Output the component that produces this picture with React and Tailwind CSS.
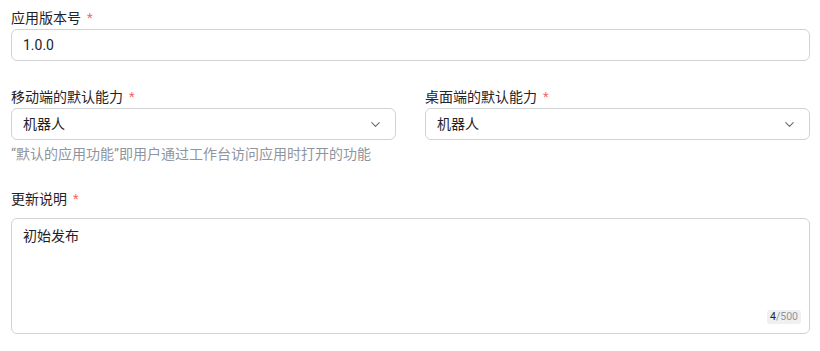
import { ChevronDown } from 'lucide-react';

const font = { fontFamily: 'Roboto, "Noto Sans CJK SC", sans-serif' };

function Label({ children }) {
  return (
    <div className="flex items-center h-[20px] text-[14px] text-[#1f2329] leading-[20px]">
      {children}
      <span className="ml-[6px] text-[13px] text-[#f76964]">*</span>
    </div>
  );
}

function Select({ value }) {
  return (
    <div className="flex items-center justify-between h-[32px] px-[11px] border border-[#d0d3d6] rounded-[6px] bg-white text-[14px] text-[#1f2329]">
      <span>{value}</span>
      <ChevronDown size={15} strokeWidth={1.75} className="text-[#646a73] mr-[1px]" />
    </div>
  );
}

export default function App() {
  return (
    <div className="bg-white w-[820px] h-[351px] pl-[11px] pr-[10px] pt-[8px]" style={font}>
      <Label>应用版本号</Label>
      <div className="mt-[1px] flex items-center h-[32px] px-[11px] border border-[#d0d3d6] rounded-[6px] text-[14px] text-[#1f2329]">
        1.0.0
      </div>

      <div className="grid grid-cols-2 gap-x-[29px] mt-[26px]">
        <div>
          <Label>移动端的默认能力</Label>
          <div className="mt-[1px]">
            <Select value="机器人" />
          </div>
          <div className="mt-[4px] text-[14px] leading-[20px] text-[#8f959e]">
            “默认的应用功能”即用户通过工作台访问应用时打开的功能
          </div>
        </div>
        <div>
          <Label>桌面端的默认能力</Label>
          <div className="mt-[1px]">
            <Select value="机器人" />
          </div>
        </div>
      </div>

      <div className="mt-[25px]">
        <Label>更新说明</Label>
        <div className="relative mt-[9px] h-[116px] border border-[#d0d3d6] rounded-[6px] px-[11px] pt-[6px] text-[14px] leading-[22px] text-[#1f2329]">
          初始发布
          <div className="absolute right-[8px] bottom-[9px] h-[14px] px-[3px] rounded-[3px] bg-[#eff0f1] text-[10.5px] leading-[14px] text-[#8f959e]">
            <span className="text-[#1f2329]">4</span>/500
          </div>
        </div>
      </div>
    </div>
  );
}
